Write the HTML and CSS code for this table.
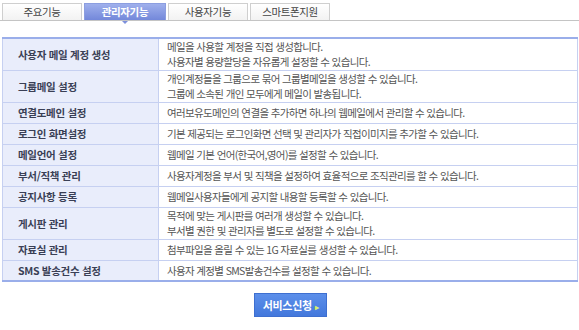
FILE: index.html
```html
<!DOCTYPE html>
<html lang="ko">
<head>
<meta charset="utf-8">
<title>관리자기능</title>
<link rel="stylesheet" href="styles.css">
</head>
<body>
<div class="page">
  <ul class="tabs">
    <li class="tab">주요기능</li>
    <li class="tab active">관리자기능</li>
    <li class="tab">사용자기능</li>
    <li class="tab">스마트폰지원</li>
  </ul>

  <table class="features">
    <tr class="two">
      <th>사용자 메일 계정 생성</th>
      <td>메일을 사용할 계정을 직접 생성합니다.<br>사용자별 용량할당을 자유롭게 설정할 수 있습니다.</td>
    </tr>
    <tr class="two">
      <th>그룹메일 설정</th>
      <td>개인계정들을 그룹으로 묶어 그룹별메일을 생성할 수 있습니다.<br>그룹에 소속된 개인 모두에게 메일이 발송됩니다.</td>
    </tr>
    <tr>
      <th>연결도메인 설정</th>
      <td>여러보유도메인의 연결을 추가하면 하나의 웹메일에서 관리할 수 있습니다.</td>
    </tr>
    <tr>
      <th>로그인 화면설정</th>
      <td>기본 제공되는 로그인화면 선택 및 관리자가 직접이미지를 추가할 수 있습니다.</td>
    </tr>
    <tr>
      <th>메일언어 설정</th>
      <td>웹메일 기본 언어(한국어,영어)를 설정할 수 있습니다.</td>
    </tr>
    <tr>
      <th>부서/직책 관리</th>
      <td>사용자계정을 부서 및 직책을 설정하여 효율적으로 조직관리를 할 수 있습니다.</td>
    </tr>
    <tr>
      <th>공지사항 등록</th>
      <td>웹메일사용자들에게 공지할 내용할 등록할 수 있습니다.</td>
    </tr>
    <tr class="two">
      <th>게시판 관리</th>
      <td>목적에 맞는 게시판를 여러개 생성할 수 있습니다.<br>부서별 권한 및 관리자를 별도로 설정할 수 있습니다.</td>
    </tr>
    <tr>
      <th>자료실 관리</th>
      <td>첨부파일을 올릴 수 있는 1G 자료실를 생성할 수 있습니다.</td>
    </tr>
    <tr>
      <th>SMS 발송건수 설정</th>
      <td>사용자 계정별 SMS발송건수를 설정할 수 있습니다.</td>
    </tr>
  </table>

  <div class="actions">
    <button class="apply" type="button">서비스신청 <span class="arrow">&#9656;</span></button>
  </div>
</div>
</body>
</html>
```

FILE: styles.css
```css
html, body {
  margin: 0;
  padding: 0;
  background: #ffffff;
}

body {
  font-family: "Noto Sans CJK KR", "Noto Sans", sans-serif;
  font-size: 11px;
  color: #555555;
}

.page {
  width: 579px;
}

/* tab strip */
.tabs {
  list-style: none;
  margin: 0;
  padding: 3px 0 0 2px;
  display: flex;
  gap: 2px;
  border-bottom: 1px solid #c4c4c4;
  height: 17px;
}

.tab {
  position: relative;
  width: 80px;
  height: 17px;
  box-sizing: border-box;
  border: 1px solid #cfcfcf;
  border-bottom: none;
  background: linear-gradient(#ffffff, #f2f2f2);
  color: #444444;
  text-align: center;
  line-height: 16px;
  font-size: 10.5px;
  letter-spacing: -0.4px;
}

.tab.active {
  width: 82px;
  border-color: #8c9ee0;
  background: linear-gradient(#9fb0ec, #7388da);
  color: #ffffff;
  font-weight: bold;
}

.tab.active::after {
  content: "";
  position: absolute;
  left: 50%;
  bottom: -4px;
  margin-left: -3px;
  border-left: 3px solid transparent;
  border-right: 3px solid transparent;
  border-top: 3px solid #7d90dc;
}

/* feature table */
.features {
  margin: 16px 0 0 2px;
  width: 576px;
  border-collapse: collapse;
  border-top: 2px solid #9aaeea;
  border-bottom: 2px solid #9aaeea;
  border-left: 1px solid #c6d0f1;
  border-right: 1px solid #c6d0f1;
}

.features tr {
  height: 21px;
}

.features tr.two {
  height: 32px;
}

.features th,
.features td {
  border-bottom: 1px solid #c6d0f1;
  padding: 0;
  vertical-align: middle;
  line-height: 15px;
}

.features th {
  width: 156px;
  background: #e9edfb;
  border-right: 1px solid #c6d0f1;
  text-align: left;
  padding-left: 15px;
  box-sizing: border-box;
  font-size: 10.5px;
  font-weight: bold;
  color: #3a3f55;
  letter-spacing: -0.3px;
}

.features td {
  padding-left: 8px;
  font-size: 10.5px;
  color: #555555;
  letter-spacing: -0.65px;
}

/* action button */
.actions {
  display: flex;
  justify-content: center;
  padding-top: 11px;
}

.apply {
  width: 73px;
  height: 24px;
  border: 1px solid #3e6fd0;
  background: linear-gradient(#5c8fea, #4378dc);
  color: #ffffff;
  font-family: inherit;
  font-size: 11px;
  font-weight: bold;
  letter-spacing: -0.3px;
  padding: 0;
  margin-left: 2px;
  cursor: pointer;
}

.apply .arrow {
  color: #d9f06a;
  font-size: 8px;
}
```
